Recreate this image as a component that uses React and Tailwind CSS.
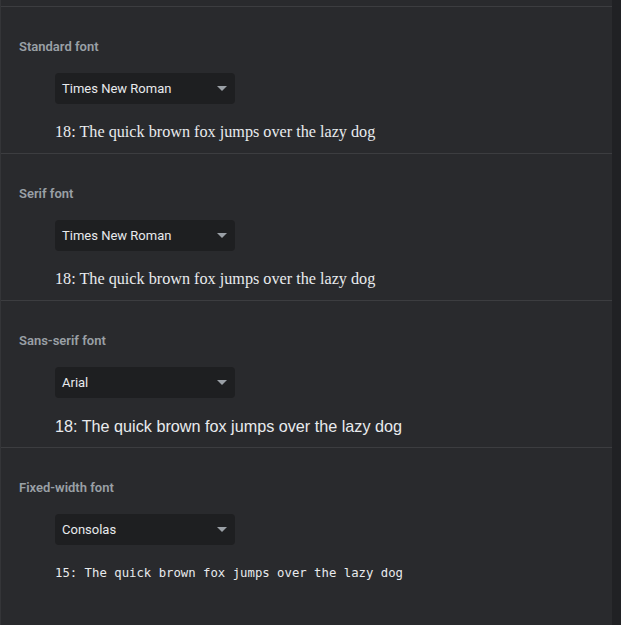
import React from "react";

const sections = [
  { label: "Standard font", value: "Times New Roman", sample: "18: The quick brown fox jumps over the lazy dog", kind: "serif" },
  { label: "Serif font", value: "Times New Roman", sample: "18: The quick brown fox jumps over the lazy dog", kind: "serif" },
  { label: "Sans-serif font", value: "Arial", sample: "18: The quick brown fox jumps over the lazy dog", kind: "sans" },
  { label: "Fixed-width font", value: "Consolas", sample: "15: The quick brown fox jumps over the lazy dog", kind: "mono" },
];

function Sample({ kind, children }) {
  if (kind === "serif")
    return (
      <div className="h-[20px] leading-[20px] text-[16.2px] text-[#e8eaed] whitespace-nowrap [font-family:'Liberation_Serif',serif]">
        {children}
      </div>
    );
  if (kind === "sans")
    return (
      <div className="h-[20px] leading-[20px] text-[16.2px] text-[#e8eaed] whitespace-nowrap [font-family:'Liberation_Sans',sans-serif]">
        {children}
      </div>
    );
  return (
    <div className="h-[20px] leading-[20px] text-[12.3px] text-[#e8eaed] whitespace-nowrap [font-family:'DejaVu_Sans_Mono',monospace]">
      {children}
    </div>
  );
}

function Section({ s }) {
  return (
    <div className="border-t border-[#3c3d40] pt-[32px] pb-[11px]">
      <div className="pl-[18px] h-[16px] leading-[16px] text-[13px] font-semibold text-[#9aa0a6]">
        {s.label}
      </div>
      <div className="pl-[54px] mt-[18px]">
        <div className="w-[180px] h-[31px] rounded-[4px] bg-[#1e1f21] flex items-center justify-between pl-[7px] pr-[8px]">
          <span className="text-[13px] text-[#e8eaed]">{s.value}</span>
          <svg width="10" height="5" viewBox="0 0 10 5" className="block">
            <path d="M0 0 L10 0 L5 5 Z" fill="#9aa0a6" />
          </svg>
        </div>
      </div>
      <div className="pl-[54px] mt-[18px]">
        <Sample kind={s.kind}>{s.sample}</Sample>
      </div>
    </div>
  );
}

export default function App() {
  return (
    <div className="w-[621px] h-[625px] bg-[#202124] flex overflow-hidden [font-family:Roboto,'Liberation_Sans',sans-serif]">
      <div className="w-[612px] h-full bg-[#292a2d] border-l border-[#343538] pt-[6px]">
        {sections.map((s) => (
          <Section key={s.label} s={s} />
        ))}
      </div>
    </div>
  );
}
